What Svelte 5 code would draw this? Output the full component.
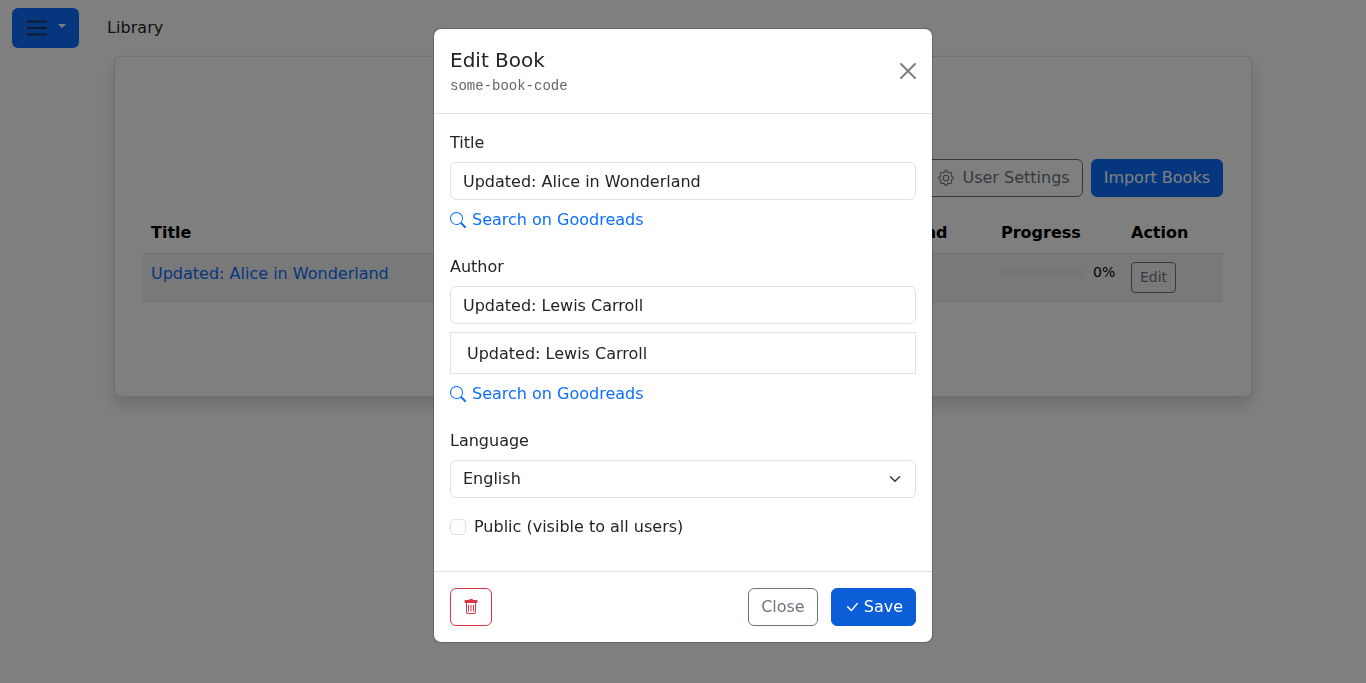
<script>
  let title = $state('Updated: Alice in Wonderland');
  let author = $state('Updated: Lewis Carroll');
  let language = $state('English');
  let isPublic = $state(false);
</script>

{#snippet searchIcon()}
  <svg class="icon" viewBox="0 0 16 16" width="16" height="16" fill="currentColor" aria-hidden="true">
    <path d="M11.742 10.344a6.5 6.5 0 1 0-1.397 1.398h-.001c.03.04.062.078.098.115l3.85 3.85a1 1 0 0 0 1.415-1.414l-3.85-3.85a1.007 1.007 0 0 0-.115-.1zM12 6.5a5.5 5.5 0 1 1-11 0 5.5 5.5 0 0 1 11 0z" />
  </svg>
{/snippet}

<div class="page">
  <nav class="navbar">
    <button class="menu-btn" aria-label="Menu">
      <svg viewBox="0 0 20 16" width="20" height="16" aria-hidden="true">
        <path d="M0 1.5h20M0 8h20M0 14.5h20" stroke="rgba(33,37,41,.75)" stroke-width="1.8" />
      </svg>
      <span class="caret"></span>
    </button>
    <span class="nav-link">Library</span>
  </nav>

  <main class="card">
    <div class="toolbar">
      <button class="btn btn-outline-dark">
        <svg class="icon" viewBox="0 0 16 16" width="16" height="16" fill="currentColor" aria-hidden="true">
          <path d="M8 4.754a3.246 3.246 0 1 0 0 6.492 3.246 3.246 0 0 0 0-6.492zM5.754 8a2.246 2.246 0 1 1 4.492 0 2.246 2.246 0 0 1-4.492 0z" />
          <path d="M9.796 1.343c-.527-1.79-3.065-1.79-3.592 0l-.094.319a.873.873 0 0 1-1.255.52l-.292-.16c-1.64-.892-3.433.902-2.54 2.541l.159.292a.873.873 0 0 1-.52 1.255l-.319.094c-1.79.527-1.79 3.065 0 3.592l.319.094a.873.873 0 0 1 .52 1.255l-.16.292c-.892 1.64.901 3.434 2.541 2.54l.292-.159a.873.873 0 0 1 1.255.52l.094.319c.527 1.79 3.065 1.79 3.592 0l.094-.319a.873.873 0 0 1 1.255-.52l.292.16c1.64.893 3.434-.902 2.54-2.541l-.159-.292a.873.873 0 0 1 .52-1.255l.319-.094c1.79-.527 1.79-3.065 0-3.592l-.319-.094a.873.873 0 0 1-.52-1.255l.16-.292c.893-1.64-.902-3.433-2.541-2.54l-.292.159a.873.873 0 0 1-1.255-.52l-.094-.319zm-2.633.283c.246-.835 1.428-.835 1.674 0l.094.319a1.873 1.873 0 0 0 2.693 1.115l.291-.16c.764-.415 1.6.42 1.184 1.185l-.159.292a1.873 1.873 0 0 0 1.116 2.692l.318.094c.835.246.835 1.428 0 1.674l-.319.094a1.873 1.873 0 0 0-1.115 2.693l.16.291c.415.764-.42 1.6-1.185 1.184l-.291-.159a1.873 1.873 0 0 0-2.693 1.116l-.094.318c-.246.835-1.428.835-1.674 0l-.094-.319a1.873 1.873 0 0 0-2.692-1.115l-.292.16c-.764.415-1.6-.42-1.184-1.185l.159-.291A1.873 1.873 0 0 0 1.945 8.93l-.319-.094c-.835-.246-.835-1.428 0-1.674l.319-.094A1.873 1.873 0 0 0 3.06 4.377l-.16-.292c-.415-.764.42-1.6 1.185-1.184l.292.159a1.873 1.873 0 0 0 2.692-1.115l.094-.319z" />
        </svg>
        User Settings
      </button>
      <button class="btn btn-primary">Import Books</button>
    </div>

    <table class="books">
      <colgroup>
        <col />
        <col class="col-found" />
        <col class="col-progress" />
        <col class="col-action" />
      </colgroup>
      <thead>
        <tr>
          <th>Title</th>
          <th>Found</th>
          <th>Progress</th>
          <th>Action</th>
        </tr>
      </thead>
      <tbody>
        <tr>
          <td><a href="#book">{title}</a></td>
          <td></td>
          <td>
            <div class="progress-cell">
              <div class="progress"></div>
              <span>0%</span>
            </div>
          </td>
          <td><button class="btn btn-sm">Edit</button></td>
        </tr>
      </tbody>
    </table>
  </main>
</div>

<div class="backdrop"></div>

<div class="modal" role="dialog" aria-label="Edit Book">
  <header class="modal-header">
    <div>
      <h5>Edit Book</h5>
      <small>some-book-code</small>
    </div>
    <button class="btn-close" aria-label="Close">
      <svg viewBox="0 0 16 16" width="16" height="16" aria-hidden="true">
        <path d="M.293.293a1 1 0 011.414 0L8 6.586 14.293.293a1 1 0 111.414 1.414L9.414 8l6.293 6.293a1 1 0 01-1.414 1.414L8 9.414l-6.293 6.293a1 1 0 01-1.414-1.414L6.586 8 .293 1.707a1 1 0 010-1.414z" />
      </svg>
    </button>
  </header>

  <div class="modal-body">
    <div class="field">
      <label for="title">Title</label>
      <input id="title" bind:value={title} />
      <a class="search-link" href="#goodreads">{@render searchIcon()} Search on Goodreads</a>
    </div>

    <div class="field">
      <label for="author">Author</label>
      <input id="author" bind:value={author} />
      <div class="suggestion">{author}</div>
      <a class="search-link" href="#goodreads">{@render searchIcon()} Search on Goodreads</a>
    </div>

    <div class="field-plain">
      <label for="language">Language</label>
      <select id="language" bind:value={language}>
        <option>English</option>
        <option>French</option>
      </select>
    </div>

    <label class="check">
      <input type="checkbox" bind:checked={isPublic} />
      <span>Public (visible to all users)</span>
    </label>
  </div>

  <footer class="modal-footer">
    <button class="btn btn-outline-danger" aria-label="Delete">
      <svg class="icon" viewBox="0 0 16 16" width="16" height="16" fill="currentColor" aria-hidden="true">
        <path d="M5.5 5.5A.5.5 0 0 1 6 6v6a.5.5 0 0 1-1 0V6a.5.5 0 0 1 .5-.5zm2.5 0a.5.5 0 0 1 .5.5v6a.5.5 0 0 1-1 0V6a.5.5 0 0 1 .5-.5zm3 .5a.5.5 0 0 0-1 0v6a.5.5 0 0 0 1 0V6z" />
        <path d="M14.5 3a1 1 0 0 1-1 1H13v9a2 2 0 0 1-2 2H5a2 2 0 0 1-2-2V4h-.5a1 1 0 0 1-1-1V2a1 1 0 0 1 1-1H6a1 1 0 0 1 1-1h2a1 1 0 0 1 1 1h3.5a1 1 0 0 1 1 1v1zM4.118 4 4 4.059V13a1 1 0 0 0 1 1h6a1 1 0 0 0 1-1V4.059L11.882 4H4.118zM2.5 3V2h11v1h-11z" />
      </svg>
    </button>
    <div class="footer-right">
      <button class="btn btn-outline-secondary">Close</button>
      <button class="btn btn-save">
        <svg class="icon" viewBox="0 0 16 16" width="16" height="16" fill="currentColor" aria-hidden="true">
          <path d="M12.736 3.97a.733.733 0 0 1 1.047 0c.286.289.29.756.01 1.05L7.88 12.01a.733.733 0 0 1-1.065.02L3.217 8.384a.757.757 0 0 1 0-1.06.733.733 0 0 1 1.047 0l3.052 3.093 5.4-6.425a.247.247 0 0 1 .02-.022Z" />
        </svg>
        Save
      </button>
    </div>
  </footer>
</div>

<style>
  :global(body) {
    background: #fff;
    color: #212529;
    font-family: "DejaVu Sans", sans-serif;
    font-size: 16px;
    line-height: 1.5;
    overflow: hidden;
  }

  .page {
    height: 683px;
    box-sizing: border-box;
  }

  .navbar {
    display: flex;
    align-items: center;
    padding: 8px 12px 0;
    height: 40px;
  }

  .menu-btn {
    display: flex;
    align-items: center;
    gap: 11px;
    width: 67px;
    height: 40px;
    padding: 0 0 0 15px;
    box-sizing: border-box;
    background: #0d6efd;
    border: none;
    border-radius: 6px;
  }

  .menu-btn .caret {
    width: 0;
    height: 0;
    margin-bottom: 4px;
    border-top: 4px solid #fff;
    border-left: 4px solid transparent;
    border-right: 4px solid transparent;
  }

  .nav-link {
    margin-left: 28px;
    letter-spacing: 0.05px;
  }

  .card {
    width: 1138px;
    box-sizing: border-box;
    margin: 8px auto 0;
    padding: 102px 28px 94px;
    background: #fff;
    border: 1px solid rgba(0, 0, 0, 0.125);
    border-radius: 6px;
    box-shadow: 0 8px 16px rgba(0, 0, 0, 0.15);
  }

  .toolbar {
    display: flex;
    justify-content: flex-end;
    gap: 8px;
    margin-bottom: 16px;
  }

  .btn {
    display: inline-flex;
    align-items: center;
    justify-content: center;
    gap: 8px;
    height: 38px;
    padding: 0 12px;
    box-sizing: border-box;
    font: inherit;
    background: transparent;
    border: 1px solid transparent;
    border-radius: 6px;
  }

  .btn-primary {
    background: #0d6efd;
    border-color: #0d6efd;
    color: #fff;
  }

  .btn-outline-dark {
    border-color: #6c757d;
    color: #6c757d;
    padding: 0 12px;
  }

  .btn-sm {
    height: 31px;
    padding: 0 8px;
    font-size: 14px;
    color: #6c757d;
    border-color: #6c757d;
    border-radius: 4px;
  }

  .books {
    width: 100%;
    table-layout: fixed;
    border-collapse: collapse;
    color: #000;
  }

  .col-found {
    width: 109px;
  }

  .col-progress {
    width: 130px;
  }

  .col-action {
    width: 100px;
  }

  .books th {
    padding: 8px;
    text-align: left;
    font-weight: 700;
    border-bottom: 1px solid #dee2e6;
  }

  .books td {
    padding: 8px;
    vertical-align: top;
    background: rgba(0, 0, 0, 0.05);
    border-bottom: 1px solid #dee2e6;
  }

  .books a {
    color: #0d6efd;
    text-decoration: none;
  }

  .progress-cell {
    display: flex;
    align-items: center;
    gap: 8px;
    font-size: 14px;
  }

  .progress {
    flex: 0 0 84px;
    height: 10px;
    background: #e9ecef;
    border-radius: 6px;
  }

  .backdrop {
    position: fixed;
    inset: 0;
    background: rgba(0, 0, 0, 0.5);
  }

  .modal {
    position: fixed;
    top: 28px;
    left: 433px;
    width: 500px;
    box-sizing: border-box;
    background: #fff;
    background-clip: padding-box;
    border: 1px solid rgba(0, 0, 0, 0.2);
    border-radius: 8px;
  }

  .modal-header {
    display: flex;
    justify-content: space-between;
    align-items: center;
    padding: 16px;
    border-bottom: 1px solid #dee2e6;
  }

  .modal-header h5 {
    margin: 0;
    font-size: 20px;
    font-weight: 500;
    line-height: 1.5;
  }

  .modal-header small {
    display: block;
    margin-top: 1px;
    font-family: "Liberation Mono", monospace;
    font-size: 14px;
    color: #666;
  }

  .btn-close {
    display: flex;
    padding: 0;
    background: none;
    border: none;
    opacity: 0.5;
  }

  .modal-body {
    padding: 17px 16px 32px;
  }

  .field {
    margin-bottom: 23px;
  }

  .field-plain {
    margin-bottom: 16px;
  }

  label {
    display: block;
    margin-bottom: 7px;
  }

  input:not([type="checkbox"]),
  select {
    display: block;
    width: 100%;
    height: 38px;
    padding: 0 12px;
    box-sizing: border-box;
    font: inherit;
    color: #212529;
    background-color: #fff;
    border: 1px solid #dee2e6;
    border-radius: 6px;
    appearance: none;
  }

  select {
    background-image: url("data:image/svg+xml,%3csvg xmlns='http://www.w3.org/2000/svg' viewBox='0 0 16 16'%3e%3cpath fill='none' stroke='%23343a40' stroke-linecap='round' stroke-linejoin='round' stroke-width='2' d='m2 5 6 6 6-6'/%3e%3c/svg%3e");
    background-repeat: no-repeat;
    background-position: right 12px center;
    background-size: 16px 12px;
  }

  .suggestion {
    margin-top: 8px;
    padding: 9px 16px 7px;
    border: 1px solid #dee2e6;
  }

  .search-link {
    display: flex;
    align-items: center;
    gap: 6px;
    margin-top: 8px;
    color: #0d6efd;
    text-decoration: none;
  }

  .icon {
    flex: none;
  }

  .check {
    display: flex;
    align-items: center;
    gap: 8px;
    margin: 0;
  }

  .check span {
    padding-top: 1px;
  }

  .check input {
    appearance: none;
    width: 16px;
    height: 16px;
    margin: 0;
    background: #fff;
    border: 1px solid #dee2e6;
    border-radius: 4px;
  }

  .modal-footer {
    display: flex;
    justify-content: space-between;
    padding: 16px;
    border-top: 1px solid #dee2e6;
  }

  .footer-right {
    display: flex;
    gap: 13px;
  }

  .btn-outline-danger {
    color: #dc3545;
    border-color: #dc3545;
    padding: 0 12px;
  }

  .btn-outline-secondary {
    color: #6c757d;
    border-color: #6c757d;
  }

  .btn-save {
    background: #0b5ed7;
    border-color: #0b5ed7;
    color: #fff;
    gap: 4px;
  }
</style>
